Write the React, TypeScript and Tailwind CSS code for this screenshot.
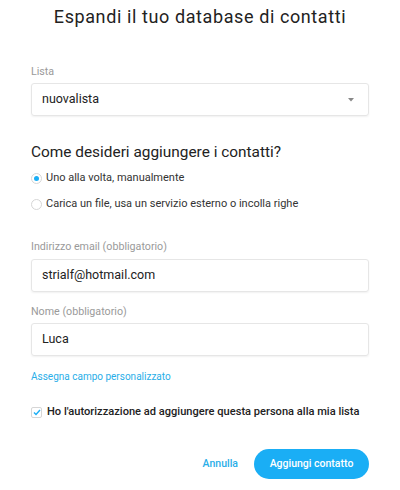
import React from "react";

export default function App() {
  return (
    <div
      className="w-[400px] h-[490px] bg-white text-[#212121] overflow-hidden"
      style={{ fontFamily: "Roboto, 'Noto Sans', sans-serif" }}
    >
      <div className="pt-[5px] text-center text-[18px] tracking-[0.6px] text-[#222] leading-[24px]">
        Espandi il tuo database di contatti
      </div>

      <div className="px-[31px] w-[400px]">
        <div className="mt-[36px] text-[10.7px] leading-[14px] text-[#9a9a9a]">Lista</div>
        <div className="mt-[4px] h-[33px] border border-[#e6e6e6] rounded-[3px] shadow-[0_1px_2px_rgba(0,0,0,0.06)] flex items-center justify-between pl-[10px] pr-[14px]">
          <span className="text-[12.5px] text-[#222]">nuovalista</span>
          <svg width="6" height="4" viewBox="0 0 6 4">
            <path d="M0 0 L6 0 L3 3.5 Z" fill="#888" />
          </svg>
        </div>

        <div className="mt-[26px] text-[15.4px] leading-[20px] text-[#222]">
          Come desideri aggiungere i contatti?
        </div>

        <div className="mt-[8px] flex items-center gap-[4px] h-[16px]">
          <span className="w-[11px] h-[11px] rounded-full border border-[#d6d6d6] flex items-center justify-center">
            <span className="w-[5px] h-[5px] rounded-full bg-[#1aaef5]" />
          </span>
          <span className="text-[11px] text-[#333]">Uno alla volta, manualmente</span>
        </div>
        <div className="mt-[10px] flex items-center gap-[4px] h-[16px]">
          <span className="w-[11px] h-[11px] rounded-full border border-[#d6d6d6]" />
          <span className="text-[11px] text-[#333]">
            Carica un file, usa un servizio esterno o incolla righe
          </span>
        </div>

        <div className="mt-[28px] text-[10.7px] leading-[14px] text-[#9a9a9a]">
          Indirizzo email (obbligatorio)
        </div>
        <div className="mt-[5px] h-[33px] border border-[#e6e6e6] rounded-[3px] shadow-[0_1px_2px_rgba(0,0,0,0.06)] flex items-center pl-[10px]">
          <span className="text-[12.5px] text-[#222]">strialf@hotmail.com</span>
        </div>

        <div className="mt-[13px] text-[10.7px] leading-[14px] text-[#9a9a9a]">
          Nome (obbligatorio)
        </div>
        <div className="mt-[4px] h-[33px] border border-[#e6e6e6] rounded-[3px] shadow-[0_1px_2px_rgba(0,0,0,0.06)] flex items-center pl-[10px]">
          <span className="text-[12.5px] text-[#222]">Luca</span>
        </div>

        <div className="mt-[14px] text-[10px] leading-[14px] text-[#2aaee8]">
          Assegna campo personalizzato
        </div>

        <div className="mt-[20px] flex items-center gap-[5px] h-[16px]">
          <span className="w-[11px] h-[11px] rounded-[2px] border border-[#d6d6d6] flex items-center justify-center">
            <svg width="8" height="7" viewBox="0 0 8 7">
              <path d="M1 3.5 L3 5.5 L7 1" stroke="#1aaef5" strokeWidth="1.4" fill="none" />
            </svg>
          </span>
          <span className="text-[11.1px] font-medium text-[#222] whitespace-nowrap">
            Ho l'autorizzazione ad aggiungere questa persona alla mia lista
          </span>
        </div>

        <div className="mt-[29px] flex items-center justify-end gap-[16px]">
          <span className="text-[10.5px] font-medium text-[#2aaee8]">Annulla</span>
          <button className="w-[115px] h-[30px] rounded-full bg-[#1aaef5] text-white text-[10.5px] font-medium">
            Aggiungi contatto
          </button>
        </div>
      </div>
    </div>
  );
}
